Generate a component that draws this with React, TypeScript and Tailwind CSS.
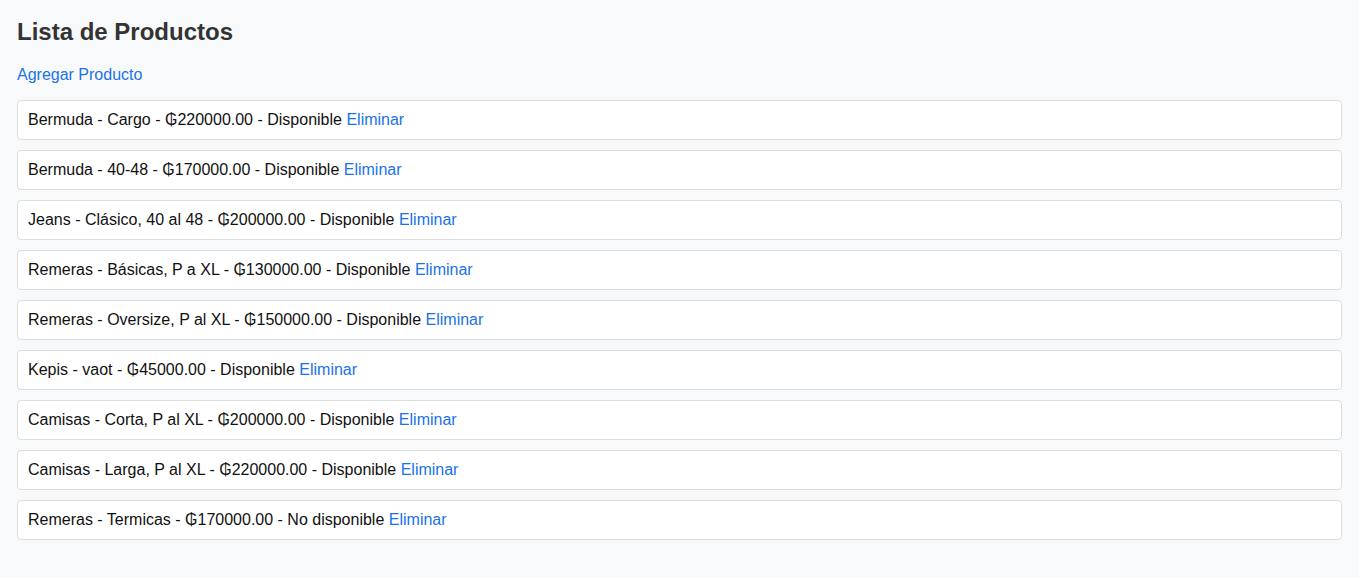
import React from "react";

const items = [
  "Bermuda - Cargo - ₲220000.00 - Disponible",
  "Bermuda - 40-48 - ₲170000.00 - Disponible",
  "Jeans - Clásico, 40 al 48 - ₲200000.00 - Disponible",
  "Remeras - Básicas, P a XL - ₲130000.00 - Disponible",
  "Remeras - Oversize, P al XL - ₲150000.00 - Disponible",
  "Kepis - vaot - ₲45000.00 - Disponible",
  "Camisas - Corta, P al XL - ₲200000.00 - Disponible",
  "Camisas - Larga, P al XL - ₲220000.00 - Disponible",
  "Remeras - Termicas - ₲170000.00 - No disponible",
];

export default function App() {
  return (
    <div
      className="min-h-[578px] bg-[#f8f9fa] px-[17px] pt-[18px] pb-[28px] text-[16px] text-[#111]"
      style={{ fontFamily: '"Liberation Sans", Arial, sans-serif' }}
    >
      <h1 className="text-[24px] font-bold leading-[28px] text-[#333]">Lista de Productos</h1>
      <div className="mt-[20px] mb-[16px] leading-[18px]">
        <a href="#" className="text-[#1a73e8]">Agregar Producto</a>
      </div>
      <ul className="flex flex-col gap-[10px]">
        {items.map((t, i) => (
          <li
            key={i}
            className="rounded-[4px] border border-[#dddddd] bg-white px-[10px] py-[10px] leading-[18px]"
          >
            {t} <a href="#" className="text-[#1a73e8]">Eliminar</a>
          </li>
        ))}
      </ul>
    </div>
  );
}
